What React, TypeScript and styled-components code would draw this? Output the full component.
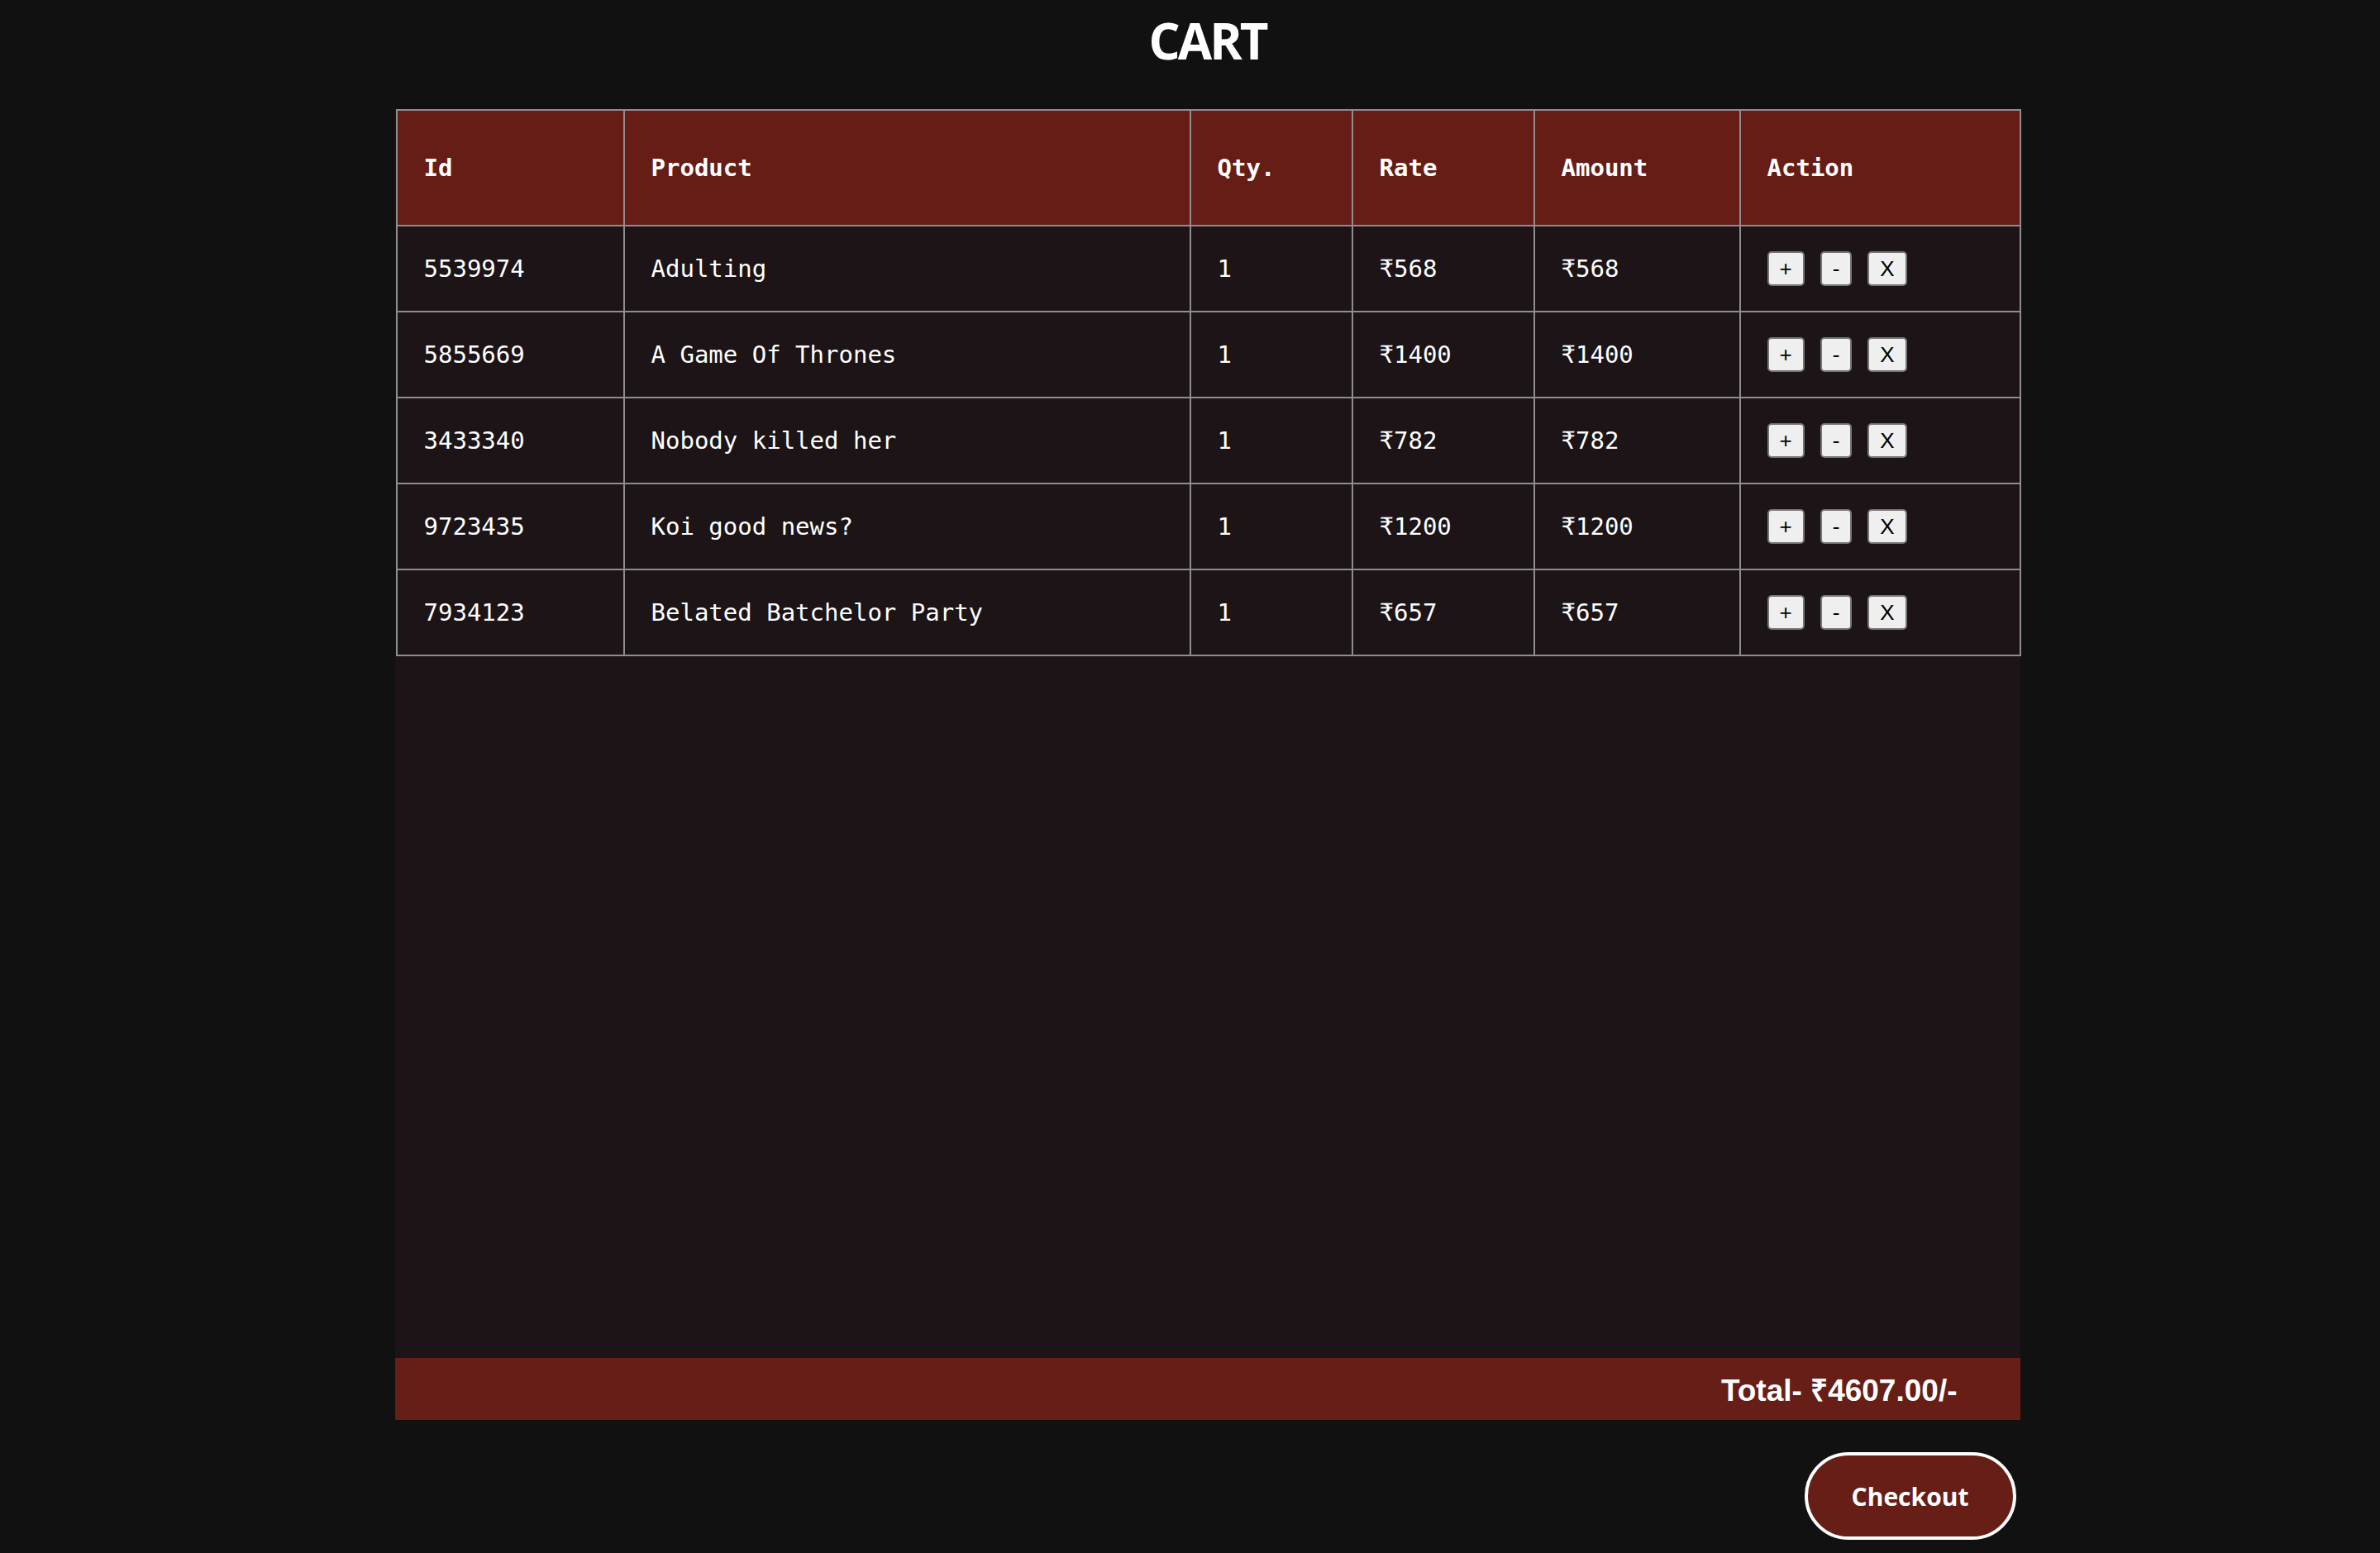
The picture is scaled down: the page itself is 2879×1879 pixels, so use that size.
import React from "react";
import styled, { createGlobalStyle } from "styled-components";

const GlobalStyle = createGlobalStyle`
  * { box-sizing: border-box; }
  body {
    margin: 0;
    background: #111111;
    color: #ffffff;
    font-family: "DejaVu Sans Mono", "Liberation Mono", monospace;
  }
`;

type Item = {
  id: string;
  name: string;
  qty: number;
  rate: number;
};

const items: Item[] = [
  { id: "5539974", name: "Adulting", qty: 1, rate: 568 },
  { id: "5855669", name: "A Game Of Thrones", qty: 1, rate: 1400 },
  { id: "3433340", name: "Nobody killed her", qty: 1, rate: 782 },
  { id: "9723435", name: "Koi good news?", qty: 1, rate: 1200 },
  { id: "7934123", name: "Belated Batchelor Party", qty: 1, rate: 657 },
];

const columns = [
  { label: "Id", width: 275 },
  { label: "Product", width: 685 },
  { label: "Qty.", width: 196 },
  { label: "Rate", width: 220 },
  { label: "Amount", width: 249 },
  { label: "Action", width: 339 },
];

const Page = styled.div`
  display: flex;
  flex-direction: column;
  align-items: center;
  padding-left: 42px;
  min-height: 100vh;
`;

const Title = styled.h1`
  margin: 0 0 34px;
  font-family: "Open Sans", "Noto Sans", sans-serif;
  font-weight: 700;
  font-size: 60px;
  line-height: 98px;
  letter-spacing: -3px;
  color: #ffffff;
`;

const Cart = styled.section`
  width: 1966px;
  display: flex;
  flex-direction: column;
`;

const Panel = styled.div`
  height: 1511px;
  background: #1c1416;
`;

const Table = styled.table`
  width: calc(100% - 2px);
  margin-left: 1px;
  border-collapse: collapse;
  table-layout: fixed;
  font-size: 29px;
`;

const HeadCell = styled.th`
  height: 140px;
  padding: 0 32px;
  text-align: left;
  font-weight: 700;
  background: #651d16;
  border: 2px solid #8e8e8e;
`;

const Cell = styled.td`
  height: 104px;
  padding: 0 32px;
  border: 2px solid #8e8e8e;
  white-space: nowrap;
`;

const Actions = styled.div`
  display: flex;
  gap: 19px;
`;

const SmallButton = styled.button`
  height: 42px;
  padding: 0 13px;
  font-family: "Liberation Sans", Arial, sans-serif;
  font-size: 26px;
  color: #000000;
  background: #efefef;
  border: 2px solid #767676;
  border-radius: 5px;
`;

const TotalBar = styled.div`
  height: 75px;
  display: flex;
  align-items: center;
  justify-content: flex-end;
  padding-right: 76px;
  background: #661e16;
  font-family: "Liberation Sans", Arial, sans-serif;
  font-weight: 700;
  font-size: 37px;
`;

const Footer = styled.div`
  display: flex;
  justify-content: flex-end;
  padding: 39px 5px 0 0;
`;

const CheckoutButton = styled.button`
  width: 256px;
  height: 106px;
  border: 4px solid #ffffff;
  border-radius: 53px;
  background: #661e16;
  color: #ffffff;
  font-family: "Open Sans", "Noto Sans", sans-serif;
  font-weight: 700;
  font-size: 30px;
`;

export default function App() {
  const total = items.reduce((sum, it) => sum + it.rate * it.qty, 0);
  return (
    <>
      <GlobalStyle />
      <Page>
        <Title>CART</Title>
        <Cart>
          <Panel>
            <Table>
              <colgroup>
                {columns.map((c) => (
                  <col key={c.label} style={{ width: c.width }} />
                ))}
              </colgroup>
              <thead>
                <tr>
                  {columns.map((c) => (
                    <HeadCell key={c.label}>{c.label}</HeadCell>
                  ))}
                </tr>
              </thead>
              <tbody>
                {items.map((it) => (
                  <tr key={it.id}>
                    <Cell>{it.id}</Cell>
                    <Cell>{it.name}</Cell>
                    <Cell>{it.qty}</Cell>
                    <Cell>₹{it.rate}</Cell>
                    <Cell>₹{it.rate * it.qty}</Cell>
                    <Cell>
                      <Actions>
                        <SmallButton>+</SmallButton>
                        <SmallButton>-</SmallButton>
                        <SmallButton>X</SmallButton>
                      </Actions>
                    </Cell>
                  </tr>
                ))}
              </tbody>
            </Table>
          </Panel>
          <TotalBar>Total- ₹{total.toFixed(2)}/-</TotalBar>
          <Footer>
            <CheckoutButton>Checkout</CheckoutButton>
          </Footer>
        </Cart>
      </Page>
    </>
  );
}
